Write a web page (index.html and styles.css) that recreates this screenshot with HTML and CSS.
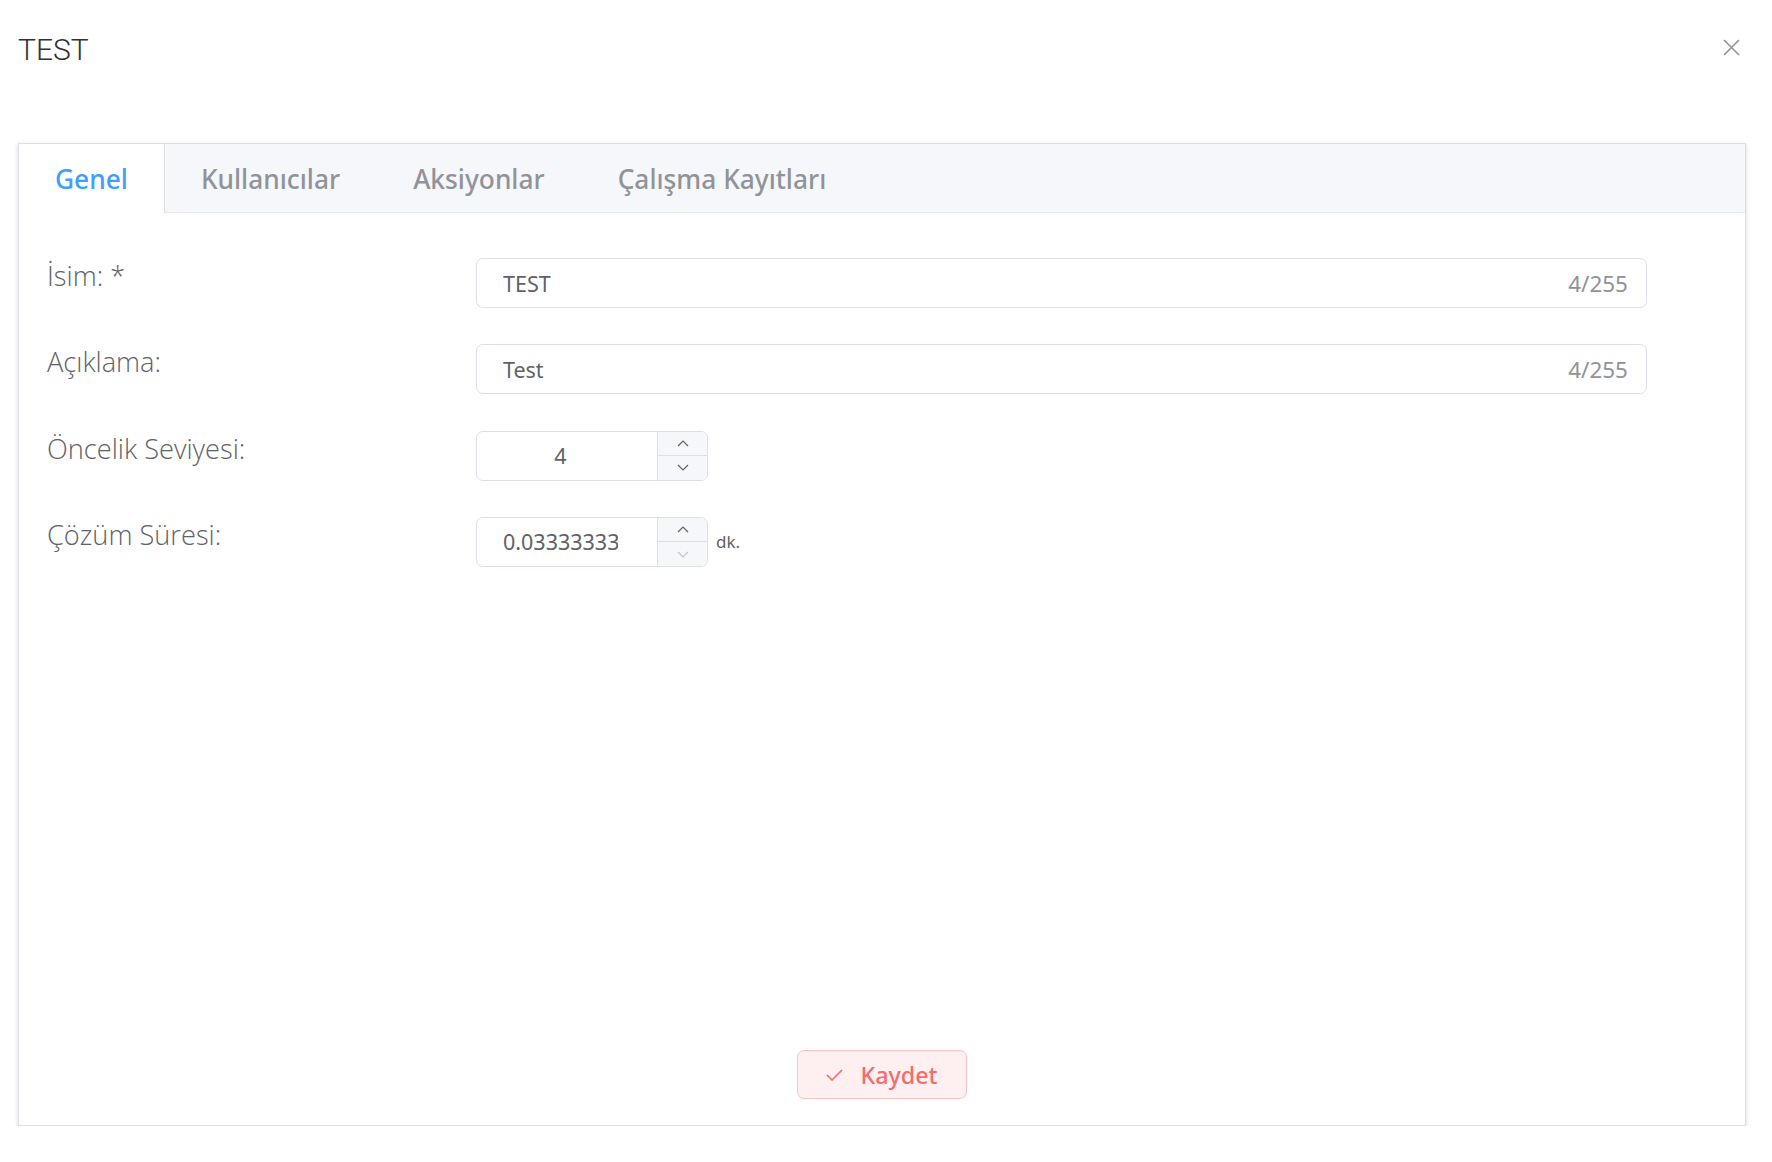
FILE: index.html
```html
<!DOCTYPE html>
<html lang="tr">
<head>
<meta charset="utf-8">
<title>TEST</title>
<link rel="stylesheet" href="styles.css">
</head>
<body>
<div class="dialog">
  <header class="dlg-head">
    <h1 class="dlg-title">TEST</h1>
    <button class="dlg-close" type="button" aria-label="Kapat">
      <svg width="17" height="17" viewBox="0 0 17 17"><path d="M1 1L16 16M16 1L1 16" fill="none" stroke="#909399" stroke-width="1.6"/></svg>
    </button>
  </header>
  <section class="tabs">
    <nav class="tabs-nav">
      <div class="tab is-active">Genel</div>
      <div class="tab">Kullanıcılar</div>
      <div class="tab">Aksiyonlar</div>
      <div class="tab">Çalışma Kayıtları</div>
    </nav>
    <div class="tabs-body">
      <form class="form">
        <div class="row">
          <label class="lbl">İsim: *</label>
          <div class="ctl">
            <div class="input wide">
              <input class="field" type="text" value="TEST">
              <span class="count">4/255</span>
            </div>
          </div>
        </div>
        <div class="row">
          <label class="lbl">Açıklama:</label>
          <div class="ctl">
            <div class="input wide">
              <input class="field" type="text" value="Test">
              <span class="count">4/255</span>
            </div>
          </div>
        </div>
        <div class="row">
          <label class="lbl">Öncelik Seviyesi:</label>
          <div class="ctl">
            <div class="num">
              <input class="num-field" type="text" value="4">
              <div class="spin">
                <span class="spin-btn"><svg width="12" height="7" viewBox="0 0 12 7"><path d="M1 6L6 1L11 6" fill="none" stroke="#606266" stroke-width="1.2"/></svg></span>
                <span class="spin-btn"><svg width="12" height="7" viewBox="0 0 12 7"><path d="M1 1L6 6L11 1" fill="none" stroke="#606266" stroke-width="1.2"/></svg></span>
              </div>
            </div>
          </div>
        </div>
        <div class="row">
          <label class="lbl">Çözüm Süresi:</label>
          <div class="ctl">
            <div class="num">
              <input class="num-field" type="text" value="0.03333333333333333">
              <div class="spin">
                <span class="spin-btn"><svg width="12" height="7" viewBox="0 0 12 7"><path d="M1 6L6 1L11 6" fill="none" stroke="#606266" stroke-width="1.2"/></svg></span>
                <span class="spin-btn"><svg width="12" height="7" viewBox="0 0 12 7"><path d="M1 1L6 6L11 1" fill="none" stroke="#c0c4cc" stroke-width="1.2"/></svg></span>
              </div>
            </div>
            <span class="unit">dk.</span>
          </div>
        </div>
      </form>
      <div class="foot">
        <button class="btn-save" type="button">
          <svg width="17" height="12" viewBox="0 0 17 12"><path d="M1 6L6 11L16 1" fill="none" stroke="#f56c6c" stroke-width="1.6"/></svg>
          <span>Kaydet</span>
        </button>
      </div>
    </div>
  </section>
</div>
</body>
</html>
```

FILE: styles.css
```css
* { box-sizing: border-box; }
html, body { margin: 0; padding: 0; background: #fff; }
body { font-family: "Noto Sans", "Open Sans", sans-serif; color: #606266; }

.dialog { width: 1772px; }

.dlg-head {
  height: 143px;
  padding: 28px 32px 0 18px;
  display: flex;
  justify-content: space-between;
  align-items: flex-start;
}
.dlg-title {
  margin: 0;
  font-family: Roboto, "Noto Sans", sans-serif;
  font-weight: 300;
  font-size: 30px;
  line-height: 44px;
  color: #303133;
}
.dlg-close {
  margin-top: 11px;
  padding: 0;
  width: 17px;
  height: 17px;
  border: 0;
  background: transparent;
  display: block;
}
.dlg-close svg { display: block; }

.tabs {
  margin-left: 18px;
  width: 1728px;
  border: 1px solid #dcdfe6;
  background: #fff;
  box-shadow: 0 2px 4px 0 rgba(0,0,0,.12), 0 0 6px 0 rgba(0,0,0,.04);
}
.tabs-nav {
  display: flex;
  height: 69px;
  background: #f5f7fa;
  border-bottom: 1px solid #e4e7ed;
}
.tab {
  height: 69px;
  padding: 0 36px;
  display: flex;
  align-items: center;
  font-size: 26.3px;
  font-weight: 500;
  color: #909399;
  border-right: 1px solid transparent;
}
.tab.is-active {
  background: #fff;
  color: #409eff;
  border-right-color: #dcdfe6;
}

.tabs-body {
  height: 912px;
  padding: 45px 28px 26px 28px;
  display: flex;
  flex-direction: column;
}
.form { flex: 1; }
.row {
  display: flex;
  align-items: flex-start;
  margin-bottom: 36.33px;
}
.lbl {
  width: 429px;
  flex: none;
  font-family: "Open Sans", "Noto Sans", sans-serif;
  font-size: 27.2px;
  font-weight: 300;
  line-height: 36px;
  color: #606266;
}
.ctl {
  display: flex;
  align-items: center;
}
.input {
  height: 50px;
  border: 1px solid #dcdfe6;
  border-radius: 7px;
  display: flex;
  align-items: center;
  padding: 0 18px 0 26px;
}
.input.wide { width: 1171px; }
.field {
  flex: 1;
  min-width: 0;
  border: 0;
  outline: 0;
  padding: 0;
  font-family: inherit;
  font-size: 21.5px;
  color: #606266;
  background: transparent;
}
.count {
  font-size: 22.5px;
  color: #909399;
}

.num {
  width: 232px;
  height: 50px;
  border: 1px solid #dcdfe6;
  border-radius: 7px;
  display: flex;
  overflow: hidden;
}
.num-field {
  width: 180px;
  border: 0;
  outline: 0;
  padding: 0 39px 0 26px;
  text-align: center;
  font-family: inherit;
  font-size: 21.5px;
  color: #606266;
  background: transparent;
}
.spin {
  width: 51px;
  flex: none;
  border-left: 1px solid #dcdfe6;
  background: #f5f7fa;
  display: flex;
  flex-direction: column;
}
.spin-btn {
  flex: 1;
  display: flex;
  align-items: center;
  justify-content: center;
}
.spin-btn + .spin-btn { border-top: 1px solid #dcdfe6; }
.spin-btn svg { display: block; }
.unit {
  margin-left: 8px;
  font-size: 17px;
  color: #606266;
}

.foot {
  display: flex;
  justify-content: center;
}
.btn-save {
  width: 170px;
  height: 49px;
  border: 1px solid #fbc4c4;
  border-radius: 7px;
  background: #fef0f0;
  color: #f56c6c;
  display: flex;
  align-items: center;
  justify-content: center;
  gap: 17px;
  font-family: inherit;
  font-size: 23.3px;
  font-weight: 500;
  padding: 0;
}
.btn-save svg { display: block; }
```
